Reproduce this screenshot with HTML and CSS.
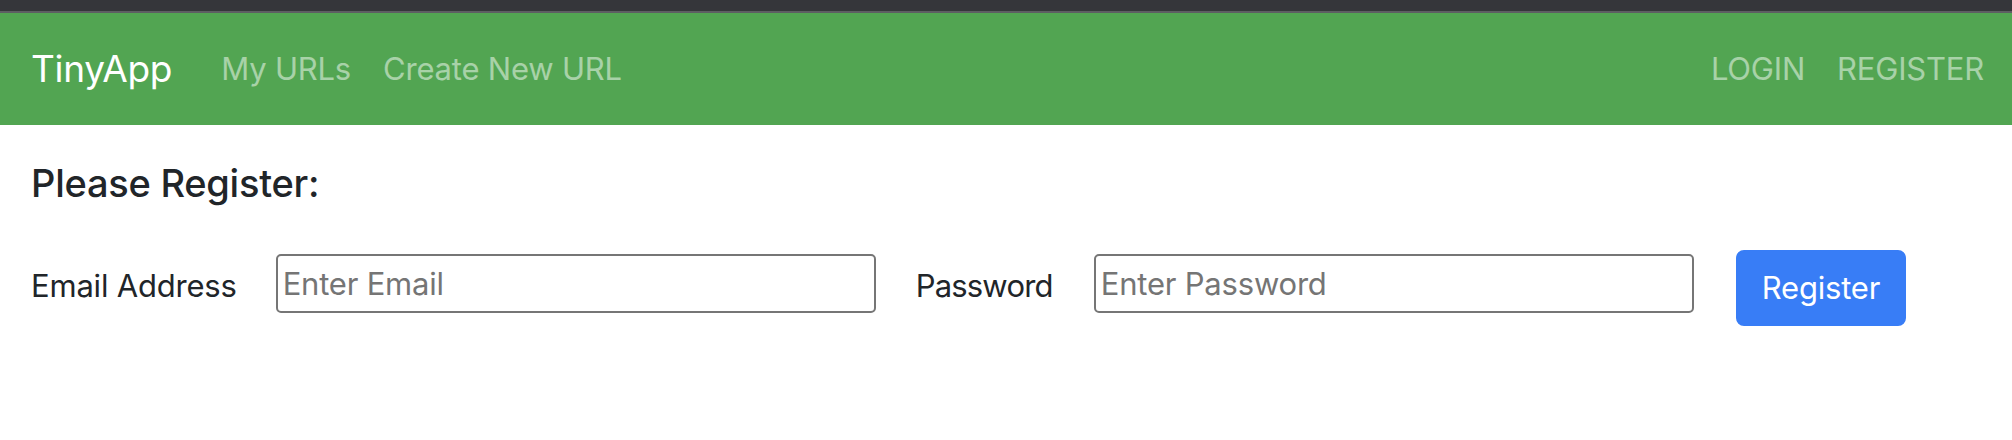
FILE: index.html
```html
<!DOCTYPE html>
<html lang="en">
<head>
<meta charset="utf-8">
<title>TinyApp - Register</title>
<link rel="stylesheet" href="styles.css">
</head>
<body>
<div class="topbar"></div>
<nav class="navbar">
  <a class="brand" href="#">TinyApp</a>
  <ul class="nav nav-left">
    <li><a class="nav-link" href="#">My URLs</a></li>
    <li><a class="nav-link" href="#">Create New URL</a></li>
  </ul>
  <ul class="nav nav-right">
    <li><a class="nav-link" href="#">LOGIN</a></li>
    <li><a class="nav-link" href="#">REGISTER</a></li>
  </ul>
</nav>
<main class="content">
  <h5 class="title">Please Register:</h5>
  <form class="reg-form">
    <label class="field-label label-email" for="email">Email Address</label>
    <input class="field-input input-email" id="email" type="text" placeholder="Enter Email">
    <label class="field-label label-password" for="password">Password</label>
    <input class="field-input input-password" id="password" type="password" placeholder="Enter Password">
    <button class="btn-register" type="submit">Register</button>
  </form>
</main>
</body>
</html>
```

FILE: styles.css
```css
html, body {
  margin: 0;
  padding: 0;
  background: #ffffff;
}

body {
  font-family: Inter, "Liberation Sans", sans-serif;
  font-size: 31px;
  letter-spacing: -0.2px;
  color: #212529;
}

.topbar {
  height: 11px;
  background: #35363a;
  border-bottom: 2px solid #5d5e62;
}

.navbar {
  display: flex;
  align-items: center;
  height: 112px;
  padding: 0 28px 0 31px;
  background: #52a552;
}

.brand {
  font-size: 37px;
  letter-spacing: -0.3px;
  line-height: 60px;
  color: #ffffff;
  text-decoration: none;
  margin-right: 33px;
}

.nav {
  display: flex;
  list-style: none;
  margin: 0;
  padding: 0;
}

.nav-right {
  margin-left: auto;
}

.nav-link {
  display: block;
  padding: 0 16px;
  font-size: 31px;
  line-height: 48px;
  color: rgba(255, 255, 255, 0.5);
  text-decoration: none;
}

.nav-right li:last-child .nav-link {
  padding-right: 0;
}

.content {
  padding: 0 31px;
}

.title {
  margin: 34px 0 0;
  font-size: 38px;
  letter-spacing: -0.25px;
  line-height: 48px;
  font-weight: 500;
}

.reg-form {
  display: flex;
  align-items: flex-start;
  margin-top: 43px;
}

.field-label {
  margin-top: 12px;
  line-height: 48px;
}

.field-input {
  box-sizing: border-box;
  width: 600px;
  height: 59px;
  margin-top: 4px;
  padding: 0 5px;
  border: 2px solid #767676;
  border-radius: 5px;
  font-family: inherit;
  font-size: 31px;
  letter-spacing: -0.2px;
  color: #212529;
  background: #ffffff;
}

.field-input::placeholder {
  color: #757575;
}

.input-email {
  margin-left: 39px;
}

.label-password {
  margin-left: 40px;
  letter-spacing: -0.8px;
}

.input-password {
  margin-left: 41px;
}

.btn-register {
  box-sizing: border-box;
  height: 76px;
  margin-left: 42px;
  padding: 0 24px;
  border: 2px solid #387df6;
  border-radius: 8px;
  background: #387df6;
  color: #ffffff;
  font-family: inherit;
  font-size: 31px;
  letter-spacing: -0.2px;
  line-height: 48px;
}
```
